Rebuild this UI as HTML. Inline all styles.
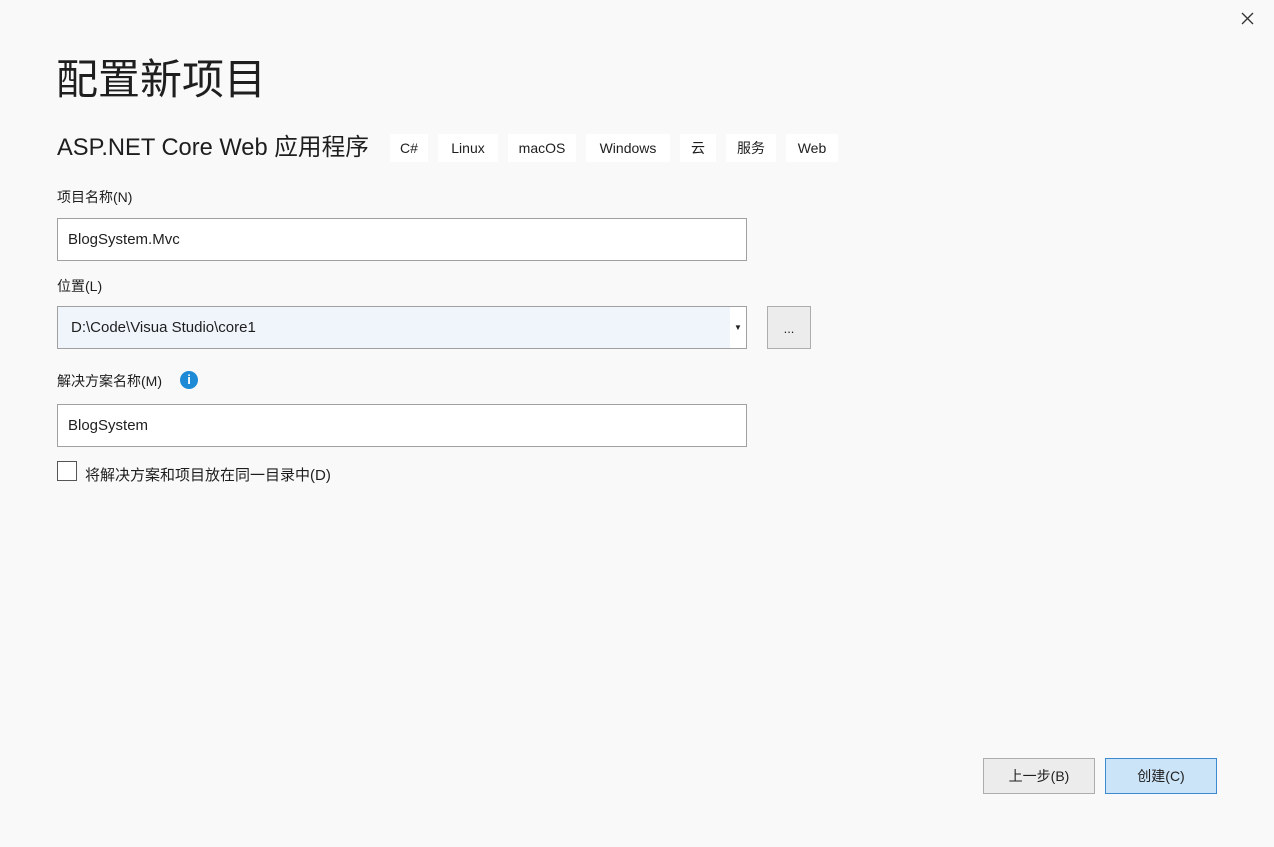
<!DOCTYPE html>
<html><head><meta charset="utf-8"><style>
*{margin:0;padding:0;box-sizing:border-box}
body{width:1274px;height:847px;background:#f9f9fa;font-family:"Liberation Sans","Noto Sans CJK SC",sans-serif;color:#1e1e1e;position:relative;overflow:hidden}
.a{position:absolute;white-space:nowrap}
.tag{position:absolute;top:134px;height:28px;background:#fff;font-size:14px;line-height:28px;text-align:center}
.lbl{font-size:14px}
.inp{position:absolute;left:57px;width:690px;height:43px;border:1px solid #a0a0a0;background:#fff;font-size:15px;padding-left:10px;line-height:41px}
.btn{position:absolute;top:758px;width:112px;height:36px;border:1px solid #adadad;background:#ececec;font-size:14px;text-align:center;line-height:34px}
</style></head><body>
<svg class="a" style="left:1241px;top:12px" width="13" height="13" viewBox="0 0 13 13"><path d="M1 1L12 12M12 1L1 12" stroke="#333" stroke-width="1.3"/></svg>
<div class="a" style="left:56px;top:46px;font-size:42px;">配置新项目</div>
<div class="a" style="left:57px;top:128px;font-size:23.7px;">ASP.NET Core Web 应用程序</div>
<div class="tag" style="left:390px;width:38px">C#</div>
<div class="tag" style="left:438px;width:60px">Linux</div>
<div class="tag" style="left:508px;width:68px">macOS</div>
<div class="tag" style="left:586px;width:84px">Windows</div>
<div class="tag" style="left:680px;width:36px">云</div>
<div class="tag" style="left:726px;width:50px">服务</div>
<div class="tag" style="left:786px;width:52px">Web</div>
<div class="a lbl" style="left:57px;top:187px">项目名称(N)</div>
<div class="inp" style="top:218px">BlogSystem.Mvc</div>
<div class="a lbl" style="left:57px;top:276px">位置(L)</div>
<div class="inp" style="top:306px;background:#f0f5fc;padding-left:13px">D:\Code\Visua Studio\core1<span style="position:absolute;right:0;top:0;width:16px;height:41px;background:#fff;font-size:8px;text-align:center">▼</span></div>
<div class="a" style="left:767px;top:306px;width:44px;height:43px;border:1px solid #adadad;background:#ececec;text-align:center;line-height:43px;font-size:13px">...</div>
<div class="a lbl" style="left:57px;top:371px">解决方案名称(M)</div>
<div class="a" style="left:180px;top:371px;width:18px;height:18px;border-radius:50%;background:#1e8ad6;color:#fff;font-size:13px;font-weight:bold;text-align:center;line-height:18px">i</div>
<div class="inp" style="top:404px">BlogSystem</div>
<div class="a" style="left:57px;top:461px;width:20px;height:20px;border:1px solid #555;background:#fff"></div>
<div class="a lbl" style="left:85px;top:464px;font-size:15px">将解决方案和项目放在同一目录中(D)</div>
<div class="btn" style="left:983px">上一步(B)</div>
<div class="btn" style="left:1105px;background:#cce4f7;border-color:#3c8ad0">创建(C)</div>
</body></html>
